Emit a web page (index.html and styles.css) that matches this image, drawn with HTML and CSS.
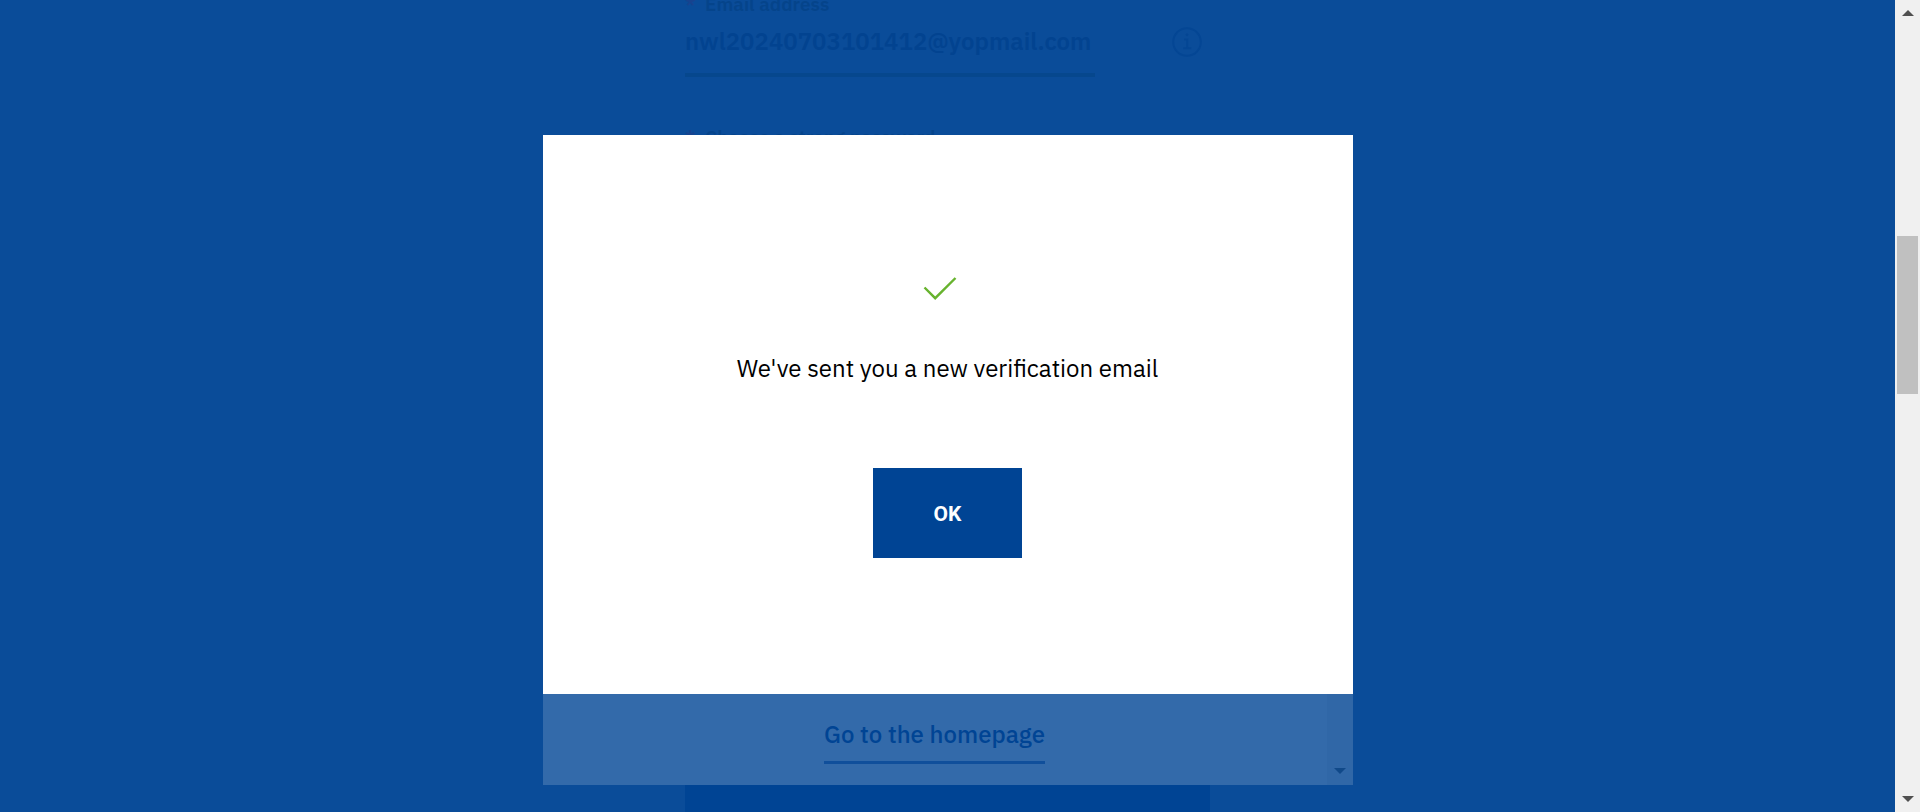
FILE: index.html
```html
<!DOCTYPE html>
<html lang="en">
<head>
<meta charset="utf-8">
<title>Verification email</title>
<link rel="stylesheet" href="styles.css">
</head>
<body>
<main class="viewport">
  <form class="account-form">
    <label class="field-label" for="email"><span class="required">*</span>Email address</label>
    <div class="field-row">
      <input class="field-input" id="email" type="email" value="nwl20240703101412@yopmail.com">
      <svg class="info-icon" viewBox="0 0 30 30" fill="none" stroke="currentColor" stroke-width="2" aria-hidden="true">
        <circle cx="15" cy="15" r="13.8"/>
        <path d="M12 12.5h3.3v8.7M11.3 21.2h8"/>
        <circle cx="15" cy="7.8" r="1" fill="currentColor" stroke-width="1"/>
      </svg>
    </div>
    <p class="field-label"><span class="required">*</span>Choose a strong password</p>
    <button class="form-submit" type="button" aria-label="Submit"></button>
  </form>
  <section class="dialog" role="dialog" aria-labelledby="dialog-text">
    <div class="dialog-body">
      <svg class="check-icon" viewBox="0 0 34 24" fill="none" stroke="currentColor" stroke-width="2.4" aria-hidden="true">
        <path d="M1.5 11.5 12.2 22.2 32.5 2"/>
      </svg>
      <p class="dialog-text" id="dialog-text">We've sent you a new verification email</p>
      <button class="ok-button" type="button">OK</button>
    </div>
    <div class="dialog-footer">
      <a class="home-link" href="#">Go to the homepage</a>
      <div class="inner-track">
        <svg class="arrow" viewBox="0 0 12 6" aria-hidden="true"><path d="M0 0h12L6 6z"/></svg>
      </div>
    </div>
  </section>
</main>
<aside class="scrollbar" aria-hidden="true">
  <svg class="arrow" viewBox="0 0 12 6"><path d="M0 6h12L6 0z"/></svg>
  <div class="thumb"></div>
  <svg class="arrow" viewBox="0 0 12 6"><path d="M0 0h12L6 6z"/></svg>
</aside>
</body>
</html>
```
FILE: styles.css
```css
* { box-sizing: border-box; }

body {
  margin: 0;
  height: 100vh;
  display: flex;
  overflow: hidden;
  background: #0a4c99;
  font-family: "IBM Plex Sans", "Noto Sans", sans-serif;
}

.viewport {
  flex: 1;
  min-width: 0;
  height: 100vh;
  display: grid;
  grid-template: 100vh / 1fr;
  justify-items: center;
}

.account-form, .dialog { grid-area: 1 / 1; }

.account-form {
  width: 100%;
  max-width: 525px;
  display: flex;
  flex-direction: column;
}

.field-label {
  margin: -8px 0 0;
  font-size: 19px;
  font-weight: 600;
  line-height: 24px;
  color: #05448b;
}

.required {
  display: inline-block;
  width: 20px;
  color: #17438f;
}

.field-row {
  display: flex;
  justify-content: space-between;
  align-items: flex-start;
  padding: 11px 8px 0 0;
}

.field-input {
  width: 410px;
  height: 50px;
  padding: 0 0 18px;
  border: 0;
  border-bottom: 4px solid #06478d;
  background: transparent;
  font: 600 24px/28px "IBM Plex Sans", "Noto Sans", sans-serif;
  color: #024390;
}

.info-icon {
  width: 30px;
  height: 30px;
  color: #044694;
}

.account-form p { margin-top: 48px; }

.form-submit {
  height: 32px;
  margin-top: auto;
  border: 0;
  background: #004494;
}

.dialog {
  z-index: 1;
  width: 100%;
  max-width: 810px;
  margin: 135px 0 27px;
  display: flex;
  flex-direction: column;
}

.dialog-body {
  flex: 1;
  padding-top: 141px;
  display: flex;
  flex-direction: column;
  align-items: center;
  background: #fff;
}

.check-icon {
  width: 34px;
  height: 24px;
  margin-right: 16px;
  color: #67b32e;
}

.dialog-text {
  margin: 50px 0 82px;
  font-size: 24px;
  line-height: 36px;
  color: #000;
}

.ok-button {
  width: 149px;
  height: 90px;
  padding: 2px 0 0;
  border: 0;
  background: #004494;
  font: 700 21px/28px Roboto, sans-serif;
  color: #fff;
}

.dialog-footer {
  height: 91px;
  display: grid;
  grid-template-columns: 26px 1fr 26px;
  background: #336aaa;
}

.home-link {
  grid-column: 2;
  justify-self: center;
  align-self: start;
  margin: 25px 26px 0 0;
  padding-bottom: 12px;
  border-bottom: 3px solid #104f9b;
  font-size: 24px;
  font-weight: 500;
  line-height: 30px;
  color: #004494;
  text-decoration: none;
}

.inner-track {
  display: flex;
  align-items: flex-end;
  justify-content: center;
  padding-bottom: 11px;
  background: #3067a7;
}

.arrow {
  width: 12px;
  height: 6px;
  fill: #505050;
}

.inner-track .arrow { fill: #104989; }

.scrollbar {
  width: 25px;
  padding: 10px 2px;
  display: grid;
  grid-template-rows: 6px 1fr 6px;
  justify-items: center;
  background: #f0f0f0;
}

.thumb {
  width: 21px;
  height: 158px;
  margin-top: 220px;
  background: #c0c0c0;
}
```
